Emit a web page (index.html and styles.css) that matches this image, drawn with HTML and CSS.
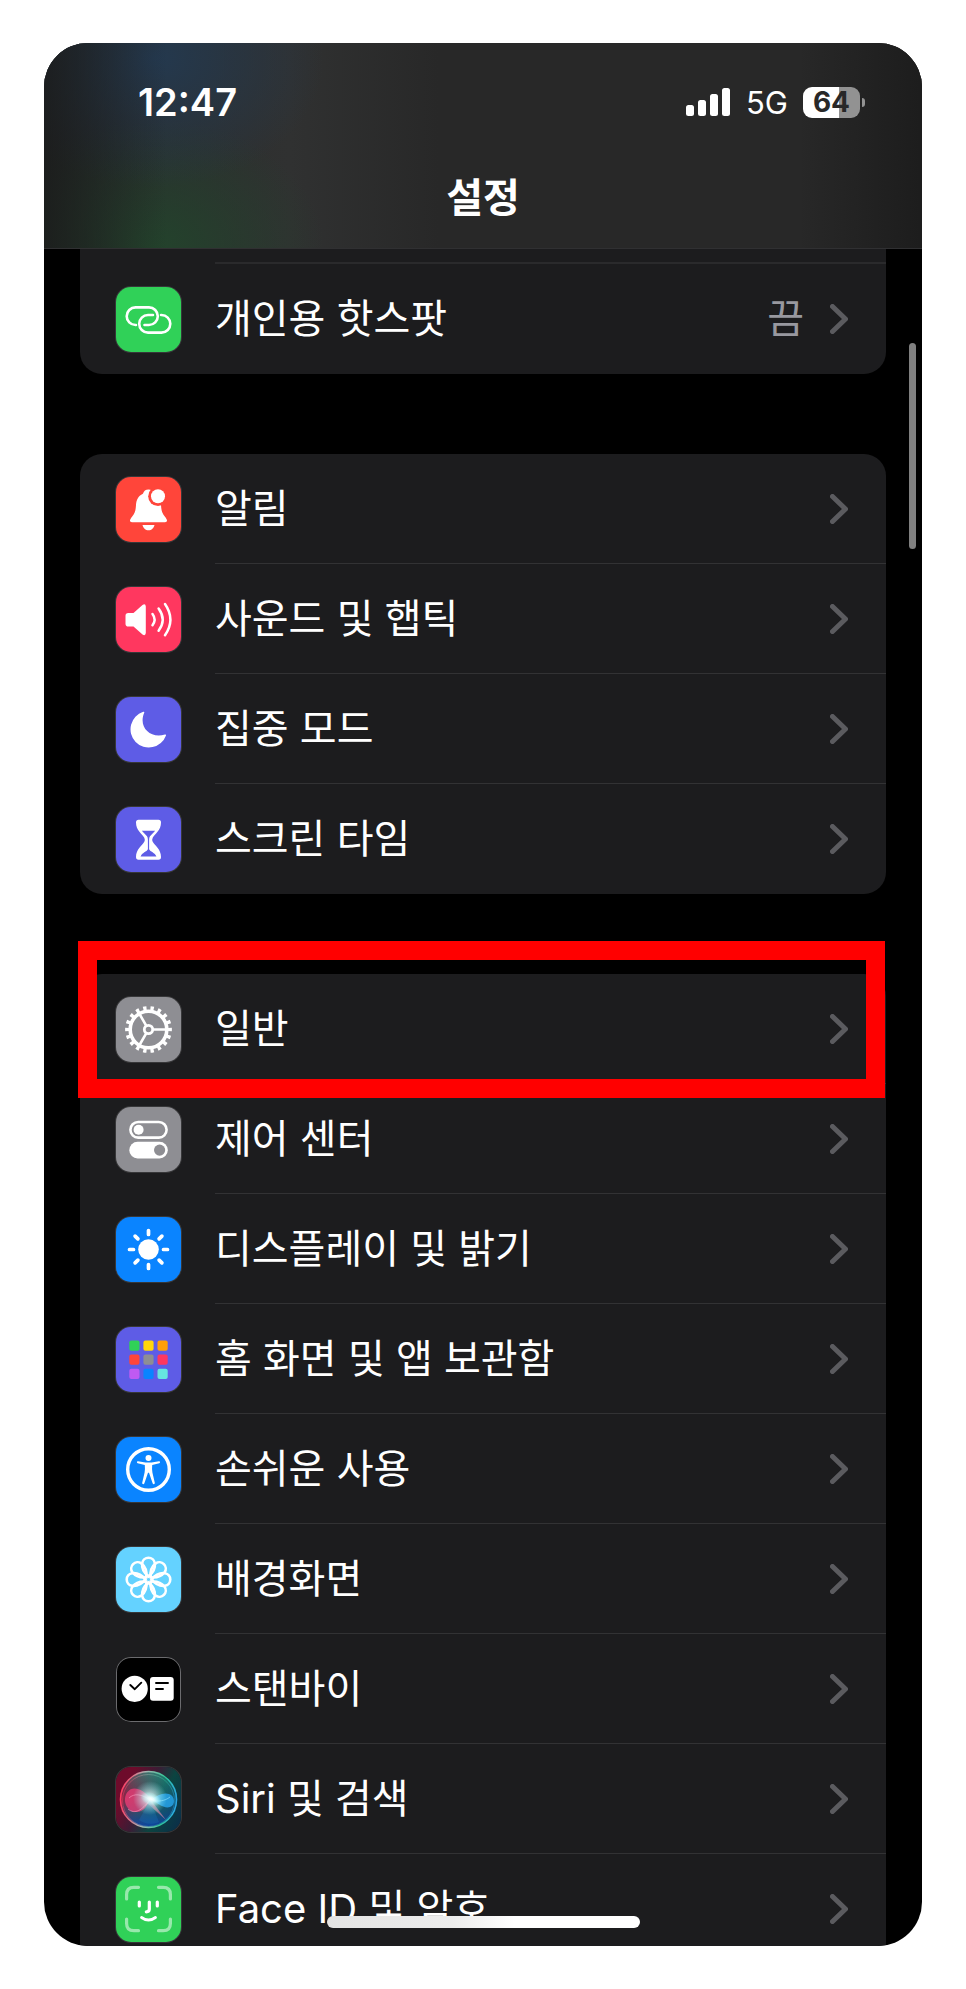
FILE: index.html
```html
<!DOCTYPE html>
<html lang="ko">
<head>
    <meta charset="UTF-8">
    <meta name="viewport" content="width=device-width, initial-scale=1.0">
    <title>설정</title>
    <link rel="stylesheet" href="styles.css">
</head>
<body>
    <!-- shared chevron -->
    <svg class="defs" width="0" height="0" aria-hidden="true">
        <symbol id="chevron" viewBox="0 0 18 30">
            <path d="M2.5 2.5L15.5 15L2.5 27.5" fill="none" stroke="#5b5b5f" stroke-width="5" stroke-linecap="round" stroke-linejoin="round"/>
        </symbol>
    </svg>

    <div class="phone">
        <header class="header">
            <div class="status-bar">
                <span class="time">12:47</span>
                <div class="status-right">
                    <svg class="signal" viewBox="0 0 45 28" fill="#fff">
                        <rect x="0" y="17" width="8" height="11" rx="2.5"/>
                        <rect x="12" y="12" width="8" height="16" rx="2.5"/>
                        <rect x="24" y="6" width="8" height="22" rx="2.5"/>
                        <rect x="36" y="0" width="8" height="28" rx="2.5"/>
                    </svg>
                    <span class="network">5G</span>
                    <div class="battery">
                        <span class="battery-level">64</span>
                        <span class="battery-tip"></span>
                    </div>
                </div>
            </div>
            <h1 class="title">설정</h1>
        </header>

        <main class="list">
            <section class="group group-first">
                <div class="row-tail"></div>
                <a href="#" class="row">
                    <svg class="icon green" viewBox="0 0 65 65" fill="none" stroke="#fff" stroke-width="2.6" stroke-linecap="round">
                        <path d="M20 38h-.5a8.8 8.8 0 0 1 0-17.6H33a8.8 8.8 0 0 1 0 17.6h-4.5"/>
                        <path d="M37 28h-5a8.8 8.8 0 0 0 0 17.6h13.5a8.8 8.8 0 0 0 0-17.6h-.5"/>
                    </svg>
                    <span class="content">
                        <span class="label">개인용 핫스팟</span>
                        <span class="value">끔</span>
                        <svg class="chevron"><use href="#chevron"/></svg>
                    </span>
                </a>
            </section>

            <section class="group">
                <a href="#" class="row">
                    <svg class="icon red" viewBox="0 0 65 65" fill="#fff">
                        <path d="M32.5 12.5c-3 0-4.6 1.5-5.6 4.2C22 19 20.3 23 20 28c-.4 6-1 8-3.8 11.5-1.5 2-2.2 3-2.2 4 0 1 .8 1.7 2 1.7h33c1.2 0 2-.7 2-1.7 0-1-.7-2-2.2-4C46 36 45.4 34 45 28c-.3-5-2-9-6.9-11.3-.6-2.7-2.6-4.2-5.6-4.2z"/>
                        <path d="M26.5 48h12c-.6 3-3 5.3-6 5.3s-5.4-2.3-6-5.3z"/>
                        <circle cx="42" cy="19.3" r="9.8" fill="#ff453a"/>
                        <circle cx="42" cy="19.3" r="7"/>
                    </svg>
                    <span class="content">
                        <span class="label">알림</span>
                        <svg class="chevron"><use href="#chevron"/></svg>
                    </span>
                </a>
                <a href="#" class="row">
                    <svg class="icon pink" viewBox="0 0 65 65" fill="#fff">
                        <path d="M12.3 26h5.2l9-8q3-1.8 3.3 1.5v26.5q-.3 3.3-3.3 1.5l-9-8h-5.2q-2.8 0-2.8-2.8v-8q0-2.7 2.8-2.7z"/>
                        <path d="M36.5 27q4.2 5.6 0 11.2M42.6 21.5q8.2 11.1 0 22.2M49 17q10.800 15.600 0 31.200" fill="none" stroke="#fff" stroke-width="2.5" stroke-linecap="round"/>
                    </svg>
                    <span class="content">
                        <span class="label">사운드 및 햅틱</span>
                        <svg class="chevron"><use href="#chevron"/></svg>
                    </span>
                </a>
                <a href="#" class="row">
                    <svg class="icon indigo" viewBox="0 0 65 65" fill="#fff">
                        <path d="M27.2 14.800a18.300 18.300 0 1 0 22.800 23.700c.3-.9-.3-1.300-1-1C34 42 22 30 28.300 15.500c.2-.6-.3-1-1.100-.7z"/>
                    </svg>
                    <span class="content">
                        <span class="label">집중 모드</span>
                        <svg class="chevron"><use href="#chevron"/></svg>
                    </span>
                </a>
                <a href="#" class="row">
                    <svg class="icon indigo" viewBox="0 0 65 65" fill="#fff">
                        <path fill-rule="evenodd" d="M22.5 12.7h20q2.5 0 2.5 2.800c0 8-6 11-8.300 15.200q-1 2 0 4C39 39 45 42 45 50q0 2.700-2.500 2.700h-20Q20 52.700 20 50c0-8 6-11 8.300-15.300q1-2 0-4C26 26.500 20 23.500 20 15.500q0-2.800 2.500-2.800zM25.800 23.800l5.200 5.400q.9 1.200.9 3.500v9.500c-1 2.500-6 3.300-7.300 7.300h15.800c-1.300-4-6.300-4.800-7.300-7.300v-9.500q0-2.300.9-3.500l5.200-5.400z"/>
                    </svg>
                    <span class="content">
                        <span class="label">스크린 타임</span>
                        <svg class="chevron"><use href="#chevron"/></svg>
                    </span>
                </a>
            </section>

            <section class="group">
                <a href="#" class="row highlight">
                    <svg class="icon gray" viewBox="0 0 65 65" fill="none" stroke="#fff">
                        <circle cx="32.5" cy="32.5" r="18.3" stroke-width="3.6"/>
                        <circle cx="32.5" cy="32.5" r="21.3" stroke-width="4.2" pathLength="36" stroke-dasharray=".9 1.1" stroke-dashoffset=".45"/>
                        <circle cx="32.5" cy="32.5" r="4.2" stroke-width="2.8"/>
                        <path d="M37 32.5h14M30.2 28.600l-7-12.100M30.200 36.400l-7 12.100" stroke-width="2.6"/>
                    </svg>
                    <span class="content">
                        <span class="label">일반</span>
                        <svg class="chevron"><use href="#chevron"/></svg>
                    </span>
                </a>
                <a href="#" class="row">
                    <svg class="icon gray" viewBox="0 0 65 65" fill="#fff">
                        <rect x="14.400" y="15" width="36.200" height="15.600" rx="7.800" fill="none" stroke="#fff" stroke-width="2.6"/>
                        <circle cx="22.600" cy="22.800" r="5"/>
                        <rect x="13.300" y="34.800" width="38.500" height="16.700" rx="8.300"/>
                        <circle cx="43.600" cy="43.100" r="5.600" fill="#8e8e93"/>
                    </svg>
                    <span class="content">
                        <span class="label">제어 센터</span>
                        <svg class="chevron"><use href="#chevron"/></svg>
                    </span>
                </a>
                <a href="#" class="row">
                    <svg class="icon blue" viewBox="0 0 65 65" fill="#fff">
                        <circle cx="32.5" cy="32.5" r="10.3"/>
                        <path d="M32.5 13.5v4M32.5 47.5v4M13.5 32.5h4M47.5 32.5h4M19.1 19.1l2.8 2.8M43.1 43.1l2.8 2.8M19.1 45.9l2.8-2.8M43.1 21.9l2.8-2.8" stroke="#fff" stroke-width="3.7" stroke-linecap="round"/>
                    </svg>
                    <span class="content">
                        <span class="label">디스플레이 및 밝기</span>
                        <svg class="chevron"><use href="#chevron"/></svg>
                    </span>
                </a>
                <a href="#" class="row">
                    <svg class="icon indigo" viewBox="0 0 65 65">
                        <rect x="13.3" y="13.5" width="10.2" height="10.2" rx="2" fill="#30d158"/>
                        <rect x="27.4" y="13.5" width="10.2" height="10.2" rx="2" fill="#ffd60a"/>
                        <rect x="41.5" y="13.5" width="10.2" height="10.2" rx="2" fill="#ff9f0a"/>
                        <rect x="13.3" y="27.6" width="10.2" height="10.2" rx="2" fill="#ff453a"/>
                        <rect x="27.4" y="27.6" width="10.2" height="10.2" rx="2" fill="#8e8e93"/>
                        <rect x="41.5" y="27.6" width="10.2" height="10.2" rx="2" fill="#ff375f"/>
                        <rect x="13.3" y="41.7" width="10.2" height="10.2" rx="2" fill="#bf5af2"/>
                        <rect x="27.4" y="41.7" width="10.2" height="10.2" rx="2" fill="#0a84ff"/>
                        <rect x="41.5" y="41.7" width="10.2" height="10.2" rx="2" fill="#66e6e0"/>
                    </svg>
                    <span class="content">
                        <span class="label">홈 화면 및 앱 보관함</span>
                        <svg class="chevron"><use href="#chevron"/></svg>
                    </span>
                </a>
                <a href="#" class="row">
                    <svg class="icon blue" viewBox="0 0 65 65" fill="#fff">
                        <circle cx="32.5" cy="32.5" r="20.8" fill="none" stroke="#fff" stroke-width="3.4"/>
                        <circle cx="32.5" cy="21" r="3"/>
                        <path d="M22 24.300l7.500 1.300h6l7.500-1.300c1.300-.2 1.500 1.700.3 2l-7.100 1.600q-.4 4 .2 7.500l2.400 10.400c.3 1.600-1.700 2-2.200.5l-3.600-10.500h-1l-3.600 10.500c-.5 1.500-2.500 1.100-2.200-.5l2.400-10.400q.6-3.500.2-7.500l-7.100-1.600c-1.200-.3-1-2.200.3-2z"/>
                    </svg>
                    <span class="content">
                        <span class="label">손쉬운 사용</span>
                        <svg class="chevron"><use href="#chevron"/></svg>
                    </span>
                </a>
                <a href="#" class="row">
                    <svg class="icon cyan" viewBox="0 0 65 65" fill="none" stroke="#fff" stroke-width="2.6">
                        <path id="petal" d="M32.5 29.5c-5-4-6.800-9.500-6.300-13.500a6.400 6.400 0 0 1 12.600 0c.5 4-1.300 9.500-6.300 13.500z"/>
                        <use href="#petal" transform="rotate(45 32.5 32.5)"/>
                        <use href="#petal" transform="rotate(90 32.5 32.5)"/>
                        <use href="#petal" transform="rotate(135 32.5 32.5)"/>
                        <use href="#petal" transform="rotate(180 32.5 32.5)"/>
                        <use href="#petal" transform="rotate(225 32.5 32.5)"/>
                        <use href="#petal" transform="rotate(270 32.5 32.5)"/>
                        <use href="#petal" transform="rotate(315 32.5 32.5)"/>
                        <circle cx="32.5" cy="32.5" r="3.8"/>
                    </svg>
                    <span class="content">
                        <span class="label">배경화면</span>
                        <svg class="chevron"><use href="#chevron"/></svg>
                    </span>
                </a>
                <a href="#" class="row">
                    <svg class="icon black" viewBox="0 0 65 65" fill="#fff">
                        <circle cx="18.7" cy="31.8" r="13.1"/>
                        <rect x="34" y="20" width="23.7" height="23.7" rx="3"/>
                        <path d="M14.3 28l4.5 4.200 6.500-6.500M40 26h12M40 32h7" fill="none" stroke="#000" stroke-width="1.9" stroke-linecap="round" stroke-linejoin="round"/>
                    </svg>
                    <span class="content">
                        <span class="label">스탠바이</span>
                        <svg class="chevron"><use href="#chevron"/></svg>
                    </span>
                </a>
                <a href="#" class="row">
                    <svg class="icon siri" viewBox="0 0 65 65" fill="none">
                        <defs>
                            <radialGradient id="glow">
                                <stop offset="0" stop-color="#fff"/>
                                <stop offset=".3" stop-color="#e8ffff" stop-opacity=".9"/>
                                <stop offset="1" stop-color="#9ff" stop-opacity="0"/>
                            </radialGradient>
                            <linearGradient id="orb" x1="0" y1="0.3" x2="1" y2="0.7">
                                <stop offset="0" stop-color="#a3163f"/>
                                <stop offset=".4" stop-color="#4b5660"/>
                                <stop offset=".65" stop-color="#1b6a66"/>
                                <stop offset="1" stop-color="#0b4a70"/>
                            </linearGradient>
                            <linearGradient id="ring" x1="0" y1="0.5" x2="1" y2="0.6">
                                <stop offset="0" stop-color="#ff3b62"/>
                                <stop offset=".4" stop-color="#a9b3b0"/>
                                <stop offset=".75" stop-color="#2fc796"/>
                                <stop offset="1" stop-color="#2aa5e8"/>
                            </linearGradient>
                            <linearGradient id="shade" x1="0" y1="0" x2="0" y2="1">
                                <stop offset="0" stop-color="#1ea183" stop-opacity=".5"/>
                                <stop offset=".5" stop-color="#103c50" stop-opacity="0"/>
                                <stop offset="1" stop-color="#0d3fb0" stop-opacity=".9"/>
                            </linearGradient>
                        </defs>
                        <circle cx="32.5" cy="32.5" r="28" fill="url(#orb)"/>
                        <circle cx="32.5" cy="32.5" r="28" fill="url(#shade)"/>
                        <path d="M35 32C27 22 17 18 11.500 25S10 44 19 45s12-7 16-13z" fill="#f03c78" fill-opacity=".75"/>
                        <path d="M34 33C26 27 18 26 13 31M34 33c-8 10-15 15-22 9" stroke="#ff9cc0" stroke-opacity=".6"/>
                        <path d="M35 32c6-3 12-7 18-5s7 11 1 13-13-4-19-8z" fill="#28a8f0" fill-opacity=".8"/>
                        <path d="M36 33c6 2 13 1 18-3" stroke="#8fe4ff" stroke-opacity=".6"/>
                        <path d="M35 33l15 20-19-17z" fill="#e889a5" fill-opacity=".6"/>
                        <path d="M34 33L23 53c5 4 14 5 20 2z" fill="#1a6fb8" fill-opacity=".35"/>
                        <circle cx="34" cy="31" r="17" fill="url(#glow)" fill-opacity=".7"/>
                        <ellipse cx="35" cy="32" rx="11" ry="6.5" fill="url(#glow)" transform="rotate(20 35 32)"/>
                        <circle cx="32.5" cy="32.5" r="28" stroke="url(#ring)" stroke-width="1.6"/>
                        <circle cx="32.5" cy="33.5" r="26" stroke="url(#ring)" stroke-opacity=".45"/>
                    </svg>
                    <span class="content">
                        <span class="label">Siri 및 검색</span>
                        <svg class="chevron"><use href="#chevron"/></svg>
                    </span>
                </a>
                <a href="#" class="row">
                    <svg class="icon green" viewBox="0 0 65 65" fill="none" stroke="#fff" stroke-width="3.2" stroke-linecap="round">
                        <path d="M10.6 22v-4.500q0-7.200 7.200-7.200h4.700M42.500 10.300h4.700q7.200 0 7.200 7.200v4.500M54.400 42v4.500q0 7.200-7.200 7.200h-4.700M22.500 53.700h-4.700q-7.200 0-7.200-7.200v-4.500" stroke-opacity=".5"/>
                        <path d="M23.300 25v4M41.300 25v4M33.300 25v7q0 2.800-3 2.800"/>
                        <path d="M25.500 40.500q7 5 14 0" stroke-width="2.8"/>
                    </svg>
                    <span class="content">
                        <span class="label">Face ID 및 암호</span>
                        <svg class="chevron"><use href="#chevron"/></svg>
                    </span>
                </a>
            </section>
        </main>

        <div class="scrollbar"></div>
        <div class="home-indicator"></div>
    </div>
</body>
</html>
```

FILE: styles.css
```css
* {
    box-sizing: border-box;
}

body {
    font-family: 'Inter', 'Noto Sans CJK KR', sans-serif;
    margin: 0;
    padding: 43px 44px;
    height: 100vh;
    background: #fff;
    color: #fff;
}

.defs {
    position: absolute;
}

.phone {
    position: relative;
    display: flex;
    flex-direction: column;
    height: 100%;
    background: #000;
    border-radius: 44px;
    overflow: hidden;
}

/* header */
.header {
    flex: none;
    padding: 24px 62px 24px 94px;
    border-bottom: 1px solid #303032;
    background:
        linear-gradient(90deg, rgba(26, 26, 26, 0.8), transparent 14%, transparent 86%, rgba(26, 26, 26, 0.8)),
        radial-gradient(ellipse 170px 130px at 110px 15px, #24394f, transparent),
        radial-gradient(ellipse 170px 130px at 110px 205px, #23432c, transparent),
        linear-gradient(90deg, #262b2b, #303131 28%, #282828 45%);
}

.status-bar {
    display: flex;
    align-items: center;
    justify-content: space-between;
    height: 70px;
}

.time {
    font-size: 38px;
    font-weight: 600;
}

.status-right {
    display: flex;
    align-items: center;
    gap: 15px;
}

.signal {
    width: 45px;
    height: 28px;
}

.network {
    font-size: 31px;
}

.battery {
    position: relative;
    width: 57px;
    height: 31px;
    border-radius: 9px;
    background: linear-gradient(90deg, #fff 64%, #929292 64%);
    text-align: center;
}

.battery-level {
    font-size: 28px;
    font-weight: 700;
    line-height: 31px;
    color: #282828;
}

.battery-tip {
    position: absolute;
    right: -5px;
    top: 11px;
    width: 3px;
    height: 9px;
    border-radius: 0 4px 4px 0;
    background: #929292;
}

.title {
    margin: 34px 0 0;
    padding-right: 32px;
    font-size: 40px;
    font-weight: 700;
    line-height: 53px;
    text-align: center;
}

/* list */
.list {
    flex: 1;
    min-height: 0;
    display: flex;
    flex-direction: column;
    gap: 80px;
    padding: 0 36px;
    overflow: hidden;
}

.group {
    flex: none;
    background: #1c1c1e;
    border-radius: 22px;
}

.group-first {
    border-radius: 0 0 22px 22px;
}

.row-tail {
    height: 15px;
    margin-left: 135px;
    border-bottom: 2px solid #2a2a2c;
}

.row {
    position: relative;
    display: flex;
    align-items: center;
    gap: 34px;
    height: 110px;
    padding-left: 36px;
    color: #fff;
    text-decoration: none;
}

.icon {
    flex: none;
    width: 65px;
    height: 65px;
    border-radius: 15px;
    box-shadow: 0 0 0 1px rgba(255, 255, 255, 0.12);
}

.green { background: #30d158; }
.red { background: #ff453a; }
.pink { background: #ff375f; }
.indigo { background: #5e5ce6; }
.gray { background: #8e8e93; }
.blue { background: #0a84ff; }
.cyan { background: #64d2ff; }

.black {
    background: #000;
    box-shadow: inset 0 0 0 1px #6b6b6e;
}

.siri {
    background: linear-gradient(115deg, #6e0b2b 20%, #3c1c35 45%, #0c4440 65%, #0a2c4a);
}

.content {
    flex: 1;
    align-self: stretch;
    display: flex;
    align-items: center;
    gap: 26px;
    padding-right: 38px;
    border-bottom: 1px solid #323234;
}

.row:last-child .content {
    border-bottom: none;
}

.label {
    flex: 1;
    font-size: 40px;
    line-height: 54px;
}

.value {
    font-size: 40px;
    line-height: 54px;
    color: #98989f;
}

.chevron {
    width: 18px;
    height: 30px;
}

/* red frame around the row */
.highlight::after {
    content: '';
    position: absolute;
    inset: -33px 1px -14px -2px;
    border: 19px solid #ff0000;
    pointer-events: none;
    z-index: 1;
}

.scrollbar {
    position: absolute;
    top: 300px;
    right: 6px;
    width: 7px;
    height: 206px;
    border-radius: 4px;
    background: #808080;
}

.home-indicator {
    position: absolute;
    bottom: 18px;
    left: 50%;
    width: 313px;
    height: 12px;
    margin-left: -156px;
    border-radius: 6px;
    background: linear-gradient(90deg, #e4e4e4, #ececec 40%, #fff 60%);
}
```
